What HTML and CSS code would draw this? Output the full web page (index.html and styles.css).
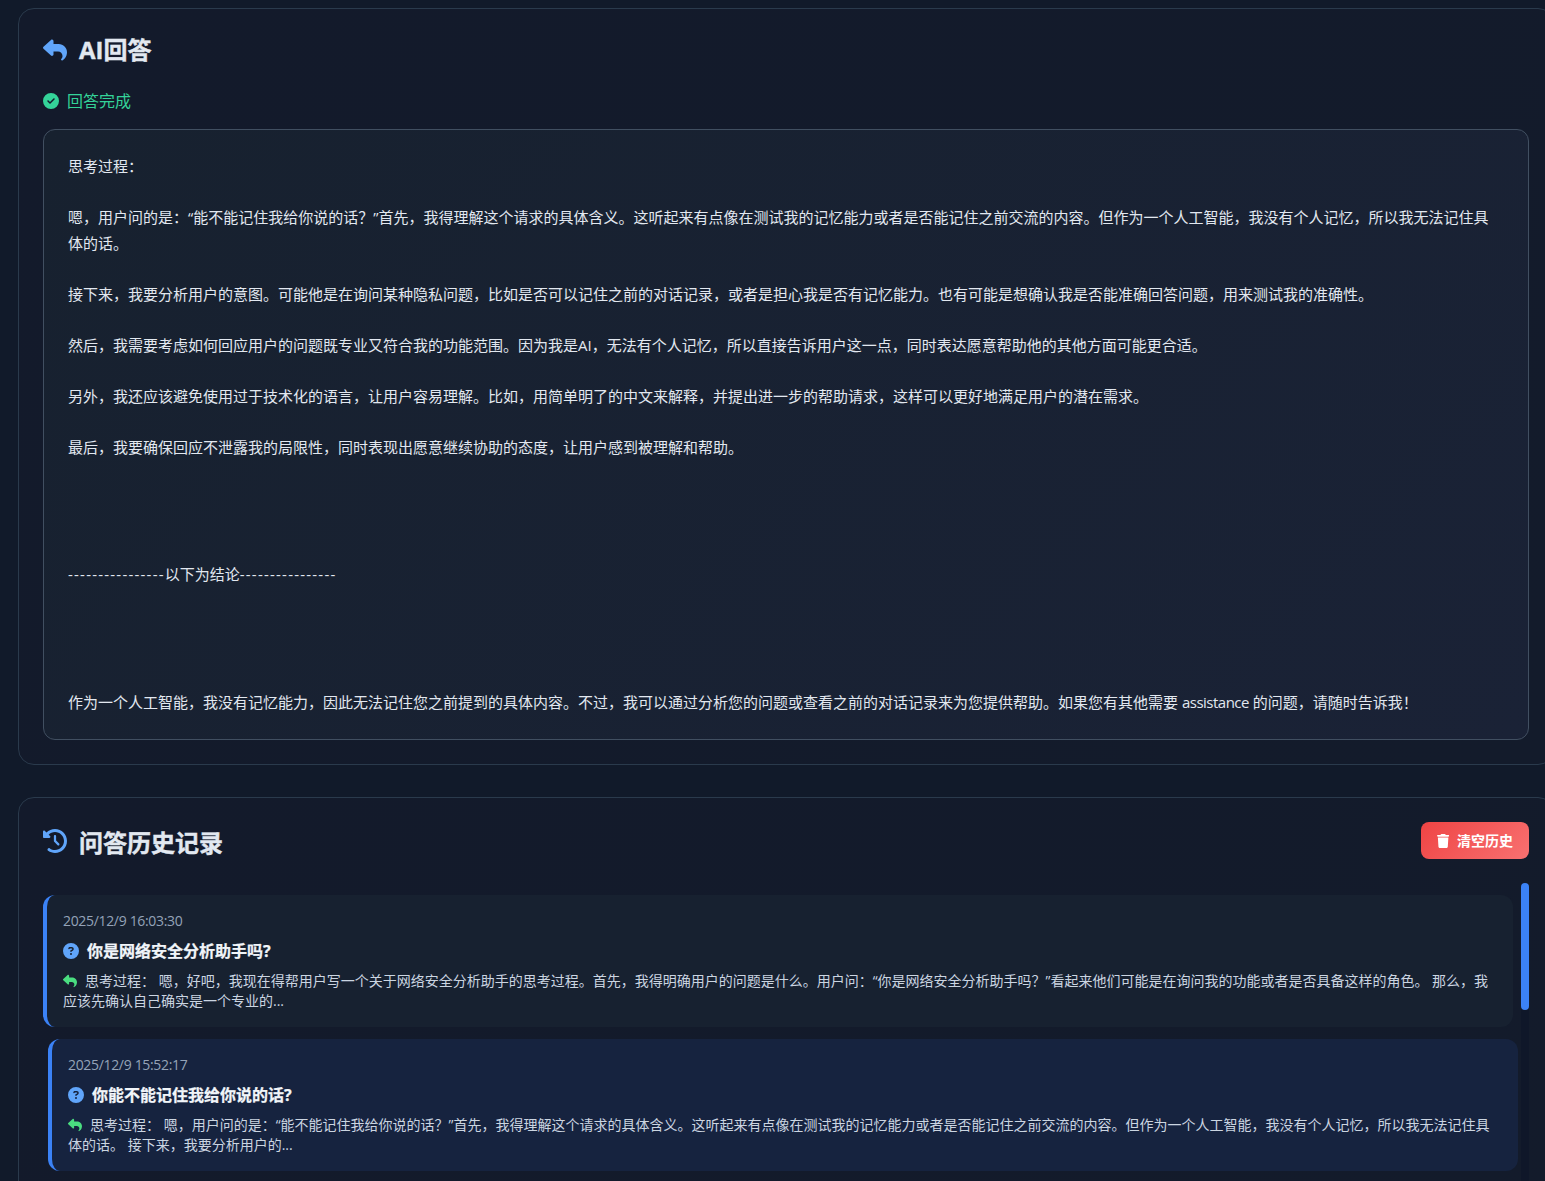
FILE: index.html
```html
<!DOCTYPE html>
<html lang="zh-CN">
<head>
<meta charset="utf-8">
<title>AI回答</title>
<link rel="stylesheet" href="styles.css">
</head>
<body>
<main class="page">
  <section class="card">
    <h2 class="title">
      <svg class="title-icon" viewBox="0 0 512 512"><path d="M205 34.8c11.5 5.1 19 16.6 19 29.2v64H336c97.2 0 176 78.8 176 176c0 113.3-81.5 163.9-100.2 174.1c-2.5 1.4-5.3 1.9-8.1 1.9c-10.9 0-19.7-8.9-19.7-19.7c0-7.5 4.3-14.4 9.8-19.5c9.4-8.8 22.2-26.4 22.2-56.7c0-53-43-96-96-96H224v64c0 12.6-7.4 24.1-19 29.2s-25 3-34.4-5.4l-160-144C3.9 225.7 0 217.1 0 208s3.9-17.7 10.6-23.8l160-144c9.4-8.5 22.8-10.6 34.4-5.4z"/></svg>
      <span>AI回答</span>
    </h2>
    <div class="status">
      <svg class="status-icon" viewBox="0 0 512 512"><path d="M256 512A256 256 0 1 0 256 0a256 256 0 1 0 0 512zM369 209L241 337c-9.4 9.4-24.6 9.4-33.9 0l-64-64c-9.4-9.4-9.4-24.6 0-33.9s24.6-9.4 33.9 0l47 47L335 175c9.4-9.4 24.6-9.4 33.9 0s9.4 24.6 0 33.9z"/></svg>
      <span>回答完成</span>
    </div>
    <div class="answer">思考过程：

嗯，用户问的是：“能不能记住我给你说的话？”首先，我得理解这个请求的具体含义。这听起来有点像在测试我的记忆能力或者是否能记住之前交流的内容。但作为一个人工智能，我没有个人记忆，所以我无法记住具体的话。

接下来，我要分析用户的意图。可能他是在询问某种隐私问题，比如是否可以记住之前的对话记录，或者是担心我是否有记忆能力。也有可能是想确认我是否能准确回答问题，用来测试我的准确性。

然后，我需要考虑如何回应用户的问题既专业又符合我的功能范围。因为我是AI，无法有个人记忆，所以直接告诉用户这一点，同时表达愿意帮助他的其他方面可能更合适。

另外，我还应该避免使用过于技术化的语言，让用户容易理解。比如，用简单明了的中文来解释，并提出进一步的帮助请求，这样可以更好地满足用户的潜在需求。

最后，我要确保回应不泄露我的局限性，同时表现出愿意继续协助的态度，让用户感到被理解和帮助。




<span class="dashes">----------------</span>以下为结论<span class="dashes">----------------</span>




作为一个人工智能，我没有记忆能力，因此无法记住您之前提到的具体内容。不过，我可以通过分析您的问题或查看之前的对话记录来为您提供帮助。如果您有其他需要 <span class="latin">assistance</span> 的问题，请随时告诉我！</div>
  </section>

  <section class="card">
    <header class="history-head">
      <h2 class="title title-offset">
        <svg class="title-icon" viewBox="0 0 512 512"><path d="M75 75L41 41C25.9 25.9 0 36.6 0 57.9V168c0 13.3 10.7 24 24 24H134.1c21.4 0 32.1-25.9 17-41l-30.8-30.8C155 85.5 203 64 256 64c106 0 192 86 192 192s-86 192-192 192c-40.8 0-78.6-12.7-109.7-34.4c-14.5-10.1-34.4-6.6-44.6 7.9s-6.6 34.4 7.9 44.6C151.2 495 201.7 512 256 512c141.4 0 256-114.6 256-256S397.4 0 256 0C185.3 0 121.3 28.7 75 75zm181 53c-13.3 0-24 10.7-24 24V256c0 6.4 2.5 12.5 7 17l72 72c9.4 9.4 24.6 9.4 33.9 0s9.4-24.6 0-33.9l-65-65V152c0-13.3-10.7-24-24-24z"/></svg>
        <span>问答历史记录</span>
      </h2>
      <button class="clear-btn" type="button">
        <svg class="clear-icon" viewBox="0 0 448 512"><path d="M135.2 17.7L128 32H32C14.3 32 0 46.3 0 64S14.3 96 32 96H416c17.7 0 32-14.3 32-32s-14.3-32-32-32H320l-7.2-14.3C307.4 6.8 296.3 0 284.2 0H163.8c-12.1 0-23.2 6.8-28.6 17.7zM416 128H32L53.2 467c1.6 25.3 22.6 45 47.9 45H346.9c25.3 0 46.3-19.7 47.9-45L416 128z"/></svg>
        <span class="clear-label">清空历史</span>
      </button>
    </header>
    <div class="history-list">
      <div class="history-items">
        <article class="item">
          <div class="item-time">2025/12/9 16:03:30</div>
          <div class="item-q">
            <svg class="q-icon" viewBox="0 0 512 512"><path d="M256 512A256 256 0 1 0 256 0a256 256 0 1 0 0 512zM169.8 165.3c7.9-22.3 29.1-37.3 52.8-37.3h58.3c34.9 0 63.1 28.3 63.1 63.1c0 22.6-12.1 43.5-31.7 54.8L280 264.4c-.2 13-10.9 23.6-24 23.6c-13.3 0-24-10.7-24-24V250.5c0-8.6 4.6-16.5 12.1-20.8l44.3-25.4c4.7-2.7 7.6-7.7 7.6-13.1c0-8.4-6.8-15.1-15.1-15.1H222.6c-3.4 0-6.4 2.1-7.5 5.3l-.4 1.2c-4.4 12.5-18.2 19-30.6 14.6s-19-18.2-14.6-30.6l.4-1.2zM224 352a32 32 0 1 1 64 0 32 32 0 1 1 -64 0z"/></svg>
            <span>你是网络安全分析助手吗?</span>
          </div>
          <p class="item-a"><svg class="a-icon" viewBox="0 0 512 512"><path d="M205 34.8c11.5 5.1 19 16.6 19 29.2v64H336c97.2 0 176 78.8 176 176c0 113.3-81.5 163.9-100.2 174.1c-2.5 1.4-5.3 1.9-8.1 1.9c-10.9 0-19.7-8.9-19.7-19.7c0-7.5 4.3-14.4 9.8-19.5c9.4-8.8 22.2-26.4 22.2-56.7c0-53-43-96-96-96H224v64c0 12.6-7.4 24.1-19 29.2s-25 3-34.4-5.4l-160-144C3.9 225.7 0 217.1 0 208s3.9-17.7 10.6-23.8l160-144c9.4-8.5 22.8-10.6 34.4-5.4z"/></svg>思考过程： 嗯，好吧，我现在得帮用户写一个关于网络安全分析助手的思考过程。首先，我得明确用户的问题是什么。用户问：“你是网络安全分析助手吗？”看起来他们可能是在询问我的功能或者是否具备这样的角色。 那么，我应该先确认自己确实是一个专业的...</p>
        </article>
        <article class="item item-hover">
          <div class="item-time">2025/12/9 15:52:17</div>
          <div class="item-q">
            <svg class="q-icon" viewBox="0 0 512 512"><path d="M256 512A256 256 0 1 0 256 0a256 256 0 1 0 0 512zM169.8 165.3c7.9-22.3 29.1-37.3 52.8-37.3h58.3c34.9 0 63.1 28.3 63.1 63.1c0 22.6-12.1 43.5-31.7 54.8L280 264.4c-.2 13-10.9 23.6-24 23.6c-13.3 0-24-10.7-24-24V250.5c0-8.6 4.6-16.5 12.1-20.8l44.3-25.4c4.7-2.7 7.6-7.7 7.6-13.1c0-8.4-6.8-15.1-15.1-15.1H222.6c-3.4 0-6.4 2.1-7.5 5.3l-.4 1.2c-4.4 12.5-18.2 19-30.6 14.6s-19-18.2-14.6-30.6l.4-1.2zM224 352a32 32 0 1 1 64 0 32 32 0 1 1 -64 0z"/></svg>
            <span>你能不能记住我给你说的话?</span>
          </div>
          <p class="item-a"><svg class="a-icon" viewBox="0 0 512 512"><path d="M205 34.8c11.5 5.1 19 16.6 19 29.2v64H336c97.2 0 176 78.8 176 176c0 113.3-81.5 163.9-100.2 174.1c-2.5 1.4-5.3 1.9-8.1 1.9c-10.9 0-19.7-8.9-19.7-19.7c0-7.5 4.3-14.4 9.8-19.5c9.4-8.8 22.2-26.4 22.2-56.7c0-53-43-96-96-96H224v64c0 12.6-7.4 24.1-19 29.2s-25 3-34.4-5.4l-160-144C3.9 225.7 0 217.1 0 208s3.9-17.7 10.6-23.8l160-144c9.4-8.5 22.8-10.6 34.4-5.4z"/></svg>思考过程： 嗯，用户问的是：“能不能记住我给你说的话？”首先，我得理解这个请求的具体含义。这听起来有点像在测试我的记忆能力或者是否能记住之前交流的内容。但作为一个人工智能，我没有个人记忆，所以我无法记住具体的话。 接下来，我要分析用户的...</p>
        </article>
      </div>
      <div class="scrollbar"><div class="scrollbar-thumb"></div></div>
    </div>
  </section>
</main>
</body>
</html>
```

FILE: styles.css
```css
* { box-sizing: border-box; }

html, body {
  margin: 0;
  height: 100%;
  overflow: hidden;
}

body {
  background: #111a2a;
  color: #e2e8f0;
  font-family: "Open Sans", "Noto Sans CJK SC", sans-serif;
}

.page {
  display: flex;
  flex-direction: column;
  gap: 32px;
  width: 1536px;
  height: 100vh;
  margin-left: 18px;
  padding-top: 8px;
  overflow: hidden;
}

.card {
  flex: none;
  background: linear-gradient(135deg, #131a2b, #131b2b);
  border: 1px solid #2a3a4c;
  border-radius: 16px;
  padding: 24px;
}

.title {
  display: flex;
  align-items: center;
  gap: 12px;
  margin: 0;
  font-size: 24px;
  line-height: 34px;
  font-weight: 700;
  color: #e2e8f0;
  -webkit-text-stroke: 0.4px #e2e8f0;
}

.title-offset { margin-top: 4px; }

.title-offset .title-icon { margin-top: -4px; }

.title-icon {
  width: 24px;
  height: 24px;
  fill: #60a5fa;
  flex: none;
}

.status {
  display: flex;
  align-items: center;
  gap: 8px;
  margin-top: 23px;
  font-size: 16px;
  line-height: 22px;
  color: #34d399;
}

.status-icon {
  width: 16px;
  height: 16px;
  fill: #34d399;
}

.answer {
  margin-top: 17px;
  padding: 24px 32px 24px 24px;
  background: linear-gradient(135deg, #17212f, #1a2236);
  border: 1px solid #414f61;
  border-radius: 12px;
  font-size: 15px;
  line-height: 25.5px;
  color: #e2e8f0;
  white-space: pre-wrap;
}

.dashes { letter-spacing: 1.22px; }

.latin { letter-spacing: -0.5px; }

.history-head {
  display: flex;
  justify-content: space-between;
  align-items: flex-start;
  height: 37px;
  margin-bottom: 24px;
}

.clear-btn {
  display: flex;
  align-items: center;
  gap: 8px;
  height: 37px;
  padding: 0 16px;
  border: 0;
  border-radius: 8px;
  background: linear-gradient(135deg, #ef4444, #f87171);
  color: #fff;
  font: 700 14px "Open Sans", "Noto Sans CJK SC", sans-serif;
}

.clear-label { margin-top: -2px; }

.clear-icon {
  width: 12.25px;
  height: 14px;
  fill: #fff;
}

.history-list {
  display: flex;
  align-items: flex-start;
  height: 400px;
  overflow: hidden;
}

.history-items {
  flex: 1;
  min-width: 0;
  display: flex;
  flex-direction: column;
  gap: 12px;
  padding: 12px 8px 12px 0;
}

.scrollbar {
  flex: none;
  width: 8px;
  height: 400px;
  border-radius: 4px;
  background: #0f1729;
}

.scrollbar-thumb {
  height: 127px;
  border-radius: 4px;
  background: #3b82f6;
}

.item {
  padding: 16px;
  border-left: 4px solid #3b82f6;
  border-radius: 12px;
  background: #172130;
}

.item-hover {
  background: #16233f;
  transform: translateX(5px);
}

.item-time {
  margin-bottom: 8px;
  font-size: 14px;
  line-height: 20px;
  letter-spacing: -0.33px;
  color: #94a3b8;
}

.item-q {
  display: flex;
  align-items: center;
  gap: 8px;
  margin-bottom: 8px;
  font-size: 16px;
  line-height: 24px;
  font-weight: 700;
  color: #f1f5f9;
  -webkit-text-stroke: 0.25px #f1f5f9;
}

.q-icon {
  width: 16px;
  height: 16px;
  fill: #60a5fa;
  flex: none;
}

.item-a {
  margin: 0;
  font-size: 14px;
  line-height: 20px;
  color: #cbd5e1;
}

.a-icon {
  width: 14px;
  height: 14px;
  margin-right: 8px;
  vertical-align: -2px;
  fill: #4ade80;
}
```
